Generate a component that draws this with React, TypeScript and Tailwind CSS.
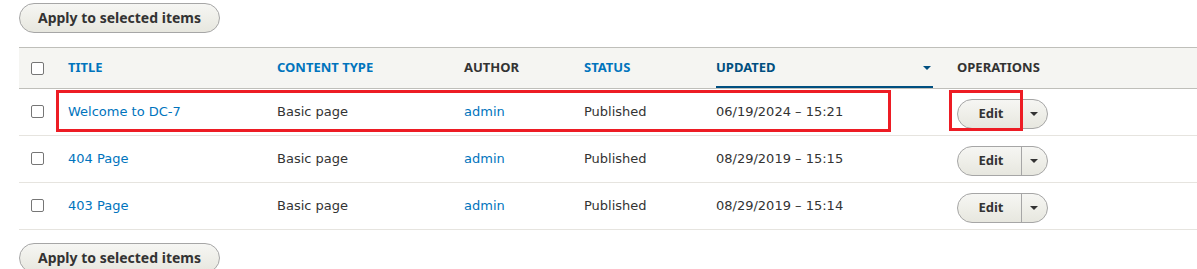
import React from 'react';

type Row = { title: string; type: string; author: string; status: string; updated: string };

const ROWS: Row[] = [
    { title: 'Welcome to DC-7', type: 'Basic page', author: 'admin', status: 'Published', updated: '06/19/2024 – 15:21' },
    { title: '404 Page', type: 'Basic page', author: 'admin', status: 'Published', updated: '08/29/2019 – 15:15' },
    { title: '403 Page', type: 'Basic page', author: 'admin', status: 'Published', updated: '08/29/2019 – 15:14' },
];

function Checkbox() {
    return (
        <span className="block w-[13px] h-[13px] rounded-[2px] border border-[#767676] bg-white" />
    );
}

function ApplyButton() {
    return (
        <button
            type="button"
            className="h-[30px] w-[201px] rounded-full border border-[#a6a6a6] bg-gradient-to-b from-[#f6f6f3] to-[#e7e7df] text-[14px] font-bold text-[#333] font-['Noto_Sans',sans-serif] leading-none"
        >
            Apply to selected items
        </button>
    );
}

function Caret({ color }: { color: string }) {
    return (
        <svg width="8" height="4" viewBox="0 0 8 4" className="block">
            <path d="M0 0h8L4 4z" fill={color} />
        </svg>
    );
}

function EditButton() {
    return (
        <div className="mt-[4px] flex h-[30px] w-[91px] rounded-full border border-[#a6a6a6] bg-gradient-to-b from-[#f6f6f3] to-[#e7e7df] overflow-hidden">
            <span className="flex w-[63px] items-center justify-center pl-[3px] text-[13px] font-bold text-[#333] font-['Noto_Sans',sans-serif]">
                Edit
            </span>
            <span className="flex flex-1 items-center justify-center border-l border-[#a6a6a6] pr-[2px]">
                <Caret color="#333" />
            </span>
        </div>
    );
}

export default function App() {
    return (
        <div className="relative bg-white pt-[3px] text-[13px] text-[#333] font-['DejaVu_Sans',sans-serif] h-[269px] overflow-hidden">
            <div className="pl-[19px]">
                <ApplyButton />
            </div>

            <table className="ml-[19px] mt-[14px] w-[1178px] table-fixed border-collapse">
                <colgroup>
                    <col className="w-[37px]" />
                    <col className="w-[209px]" />
                    <col className="w-[187px]" />
                    <col className="w-[120px]" />
                    <col className="w-[132px]" />
                    <col className="w-[241px]" />
                    <col />
                </colgroup>
                <thead>
                    <tr className="bg-[#f5f5f2] border-t border-b border-[#bfbfba] text-left font-['Noto_Sans',sans-serif] text-[13px] font-bold uppercase">
                        <th className="px-[12px] py-0">
                            <div className="flex h-[40px] items-center"><Checkbox /></div>
                        </th>
                        <th className="px-[12px] py-0 text-[#0074bd]"><div className="flex h-[40px] items-center">Title</div></th>
                        <th className="px-[12px] py-0 text-[#0074bd]"><div className="flex h-[40px] items-center">Content type</div></th>
                        <th className="px-[12px] py-0 text-[#333]"><div className="flex h-[40px] items-center">Author</div></th>
                        <th className="px-[12px] py-0 text-[#0074bd]"><div className="flex h-[40px] items-center">Status</div></th>
                        <th className="px-[12px] py-0 text-[#004f80]">
                            <div className="flex h-[40px] items-center justify-between border-b-2 border-[#004f80] pt-[2px] pr-[2px]">
                                <span>Updated</span>
                                <Caret color="#004f80" />
                            </div>
                        </th>
                        <th className="px-[12px] py-0 text-[#333]"><div className="flex h-[40px] items-center">Operations</div></th>
                    </tr>
                </thead>
                <tbody>
                    {ROWS.map(r => (
                        <tr key={r.title} className="border-b border-[#e6e4df]">
                            <td className="px-[12px] py-0">
                                <div className="flex h-[46px] items-center pb-[2px]"><Checkbox /></div>
                            </td>
                            <td className="px-[12px] py-0 text-[#0074bd]">{r.title}</td>
                            <td className="px-[12px] py-0">{r.type}</td>
                            <td className="px-[12px] py-0 text-[#0074bd]">{r.author}</td>
                            <td className="px-[12px] py-0">{r.status}</td>
                            <td className="px-[12px] py-0">{r.updated}</td>
                            <td className="px-[12px] py-0">
                                <div className="flex h-[46px] items-center"><EditButton /></div>
                            </td>
                        </tr>
                    ))}
                </tbody>
            </table>

            <div className="pl-[19px] mt-[13px]">
                <ApplyButton />
            </div>

            {/* annotation boxes */}
            <div className="absolute left-[56px] top-[90px] h-[42px] w-[835px] border-[3px] border-[#ed1c24] pointer-events-none" />
            <div className="absolute left-[949px] top-[90px] h-[41px] w-[74px] border-[3px] border-[#ed1c24] pointer-events-none" />
        </div>
    );
}
